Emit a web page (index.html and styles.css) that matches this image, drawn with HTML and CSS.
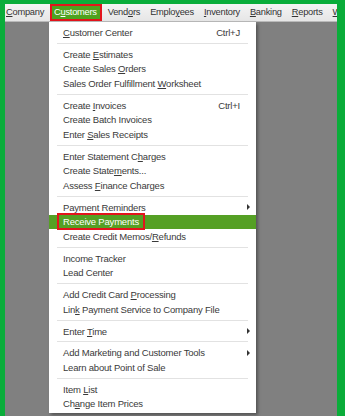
FILE: index.html
```html
<!DOCTYPE html>
<html lang="en">
<head>
    <meta charset="UTF-8">
    <meta name="viewport" content="width=device-width, initial-scale=1.0">
    <title>Customers Menu</title>
    <link rel="stylesheet" href="styles.css">
</head>
<body>
    <div class="frame">
        <div class="menubar">
            <span class="top-item"><u>C</u>ompany</span>
            <span class="top-item active">C<u>u</u>stomers</span>
            <span class="top-item">Vend<u>o</u>rs</span>
            <span class="top-item">Emplo<u>y</u>ees</span>
            <span class="top-item"><u>I</u>nventory</span>
            <span class="top-item"><u>B</u>anking</span>
            <span class="top-item"><u>R</u>eports</span>
            <span class="top-item"><u>W</u></span>
        </div>

        <div class="workspace">
            <div class="dropdown">
                <div class="item"><span><u>C</u>ustomer Center</span><span class="key">Ctrl+J</span></div>
                <div class="sep"></div>
                <div class="item"><span>Create <u>E</u>stimates</span></div>
                <div class="item"><span>Create Sales <u>O</u>rders</span></div>
                <div class="item"><span>Sales Order Fulfillment <u>W</u>orksheet</span></div>
                <div class="sep"></div>
                <div class="item"><span>Create <u>I</u>nvoices</span><span class="key">Ctrl+I</span></div>
                <div class="item"><span>Create Batch Invoices</span></div>
                <div class="item"><span>Enter <u>S</u>ales Receipts</span></div>
                <div class="sep"></div>
                <div class="item"><span>Enter Statement C<u>h</u>arges</span></div>
                <div class="item"><span>Create State<u>m</u>ents...</span></div>
                <div class="item"><span>Assess <u>F</u>inance Charges</span></div>
                <div class="sep"></div>
                <div class="item"><span>Payment Reminders</span><span class="arrow"></span></div>
                <div class="item selected"><span class="boxed">Receive Payments</span></div>
                <div class="item"><span>Create Credit Memos/<u>R</u>efunds</span></div>
                <div class="sep"></div>
                <div class="item"><span>Income Tracker</span></div>
                <div class="item"><span>Lead Center</span></div>
                <div class="sep"></div>
                <div class="item"><span>Add Credit Card <u>P</u>rocessing</span></div>
                <div class="item"><span>Lin<u>k</u> Payment Service to Company File</span></div>
                <div class="sep"></div>
                <div class="item"><span>Enter <u>T</u>ime</span><span class="arrow"></span></div>
                <div class="sep"></div>
                <div class="item"><span>Add Marketing and Customer Tools</span><span class="arrow"></span></div>
                <div class="item"><span>Learn about Point of Sale</span></div>
                <div class="sep"></div>
                <div class="item"><span>Item <u>L</u>ist</span></div>
                <div class="item"><span>Ch<u>a</u>nge Item Prices</span></div>
            </div>
        </div>
    </div>
</body>
</html>
```

FILE: styles.css
```css
body {
    margin: 0;
    padding: 0;
    background-color: #0aad3a;
    font-family: "Liberation Sans", Arial, sans-serif;
    font-size: 9.5px;
    letter-spacing: -0.2px;
    color: #3a3a3a;
}
.frame {
    margin: 4px 8px 0 5px;
    height: 412px;
    display: flex;
    flex-direction: column;
    overflow: hidden;
}
.menubar {
    display: flex;
    height: 17px;
    align-items: center;
    background: linear-gradient(#f4f4f4, #e6e6e6);
    border-bottom: 1px solid #b9b9b9;
    white-space: nowrap;
    overflow: hidden;
    font-size: 9.3px;
    letter-spacing: -0.25px;
}
.top-item {
    padding: 0 0 0 1px;
    margin-right: 9px;
    line-height: 17px;
    color: #333;
}
.top-item.active {
    background-color: #4ea21f;
    color: #fff;
    border: 2px solid #e3141c;
    line-height: 13px;
    padding: 0 3px 0 2px;
    margin-left: -3px;
    margin-right: 5px;
}
.workspace {
    flex: 1;
    background-color: #808080;
    padding-left: 44px;
}
.dropdown {
    width: 207px;
    background-color: #fff;
    padding: 3px 0 2px;
    box-shadow: 2px 2px 3px rgba(0, 0, 0, 0.35);
}
.item {
    display: flex;
    justify-content: space-between;
    align-items: center;
    height: 14.7px;
    padding: 0 16px 0 14px;
    white-space: nowrap;
}
.item .key {
    color: #3a3a3a;
}
.item .arrow {
    width: 0;
    height: 0;
    border-top: 3px solid transparent;
    border-bottom: 3px solid transparent;
    border-left: 3px solid #333;
    margin-right: -10px;
}
.item.selected {
    background-color: #55a024;
    color: #fff;
    padding-left: 8px;
}
.boxed {
    border: 2px solid #e3141c;
    padding: 1px 4px;
}
.sep {
    height: 1px;
    background-color: #e2e2e2;
    margin: 3px 8px 3px 8px;
}
```
